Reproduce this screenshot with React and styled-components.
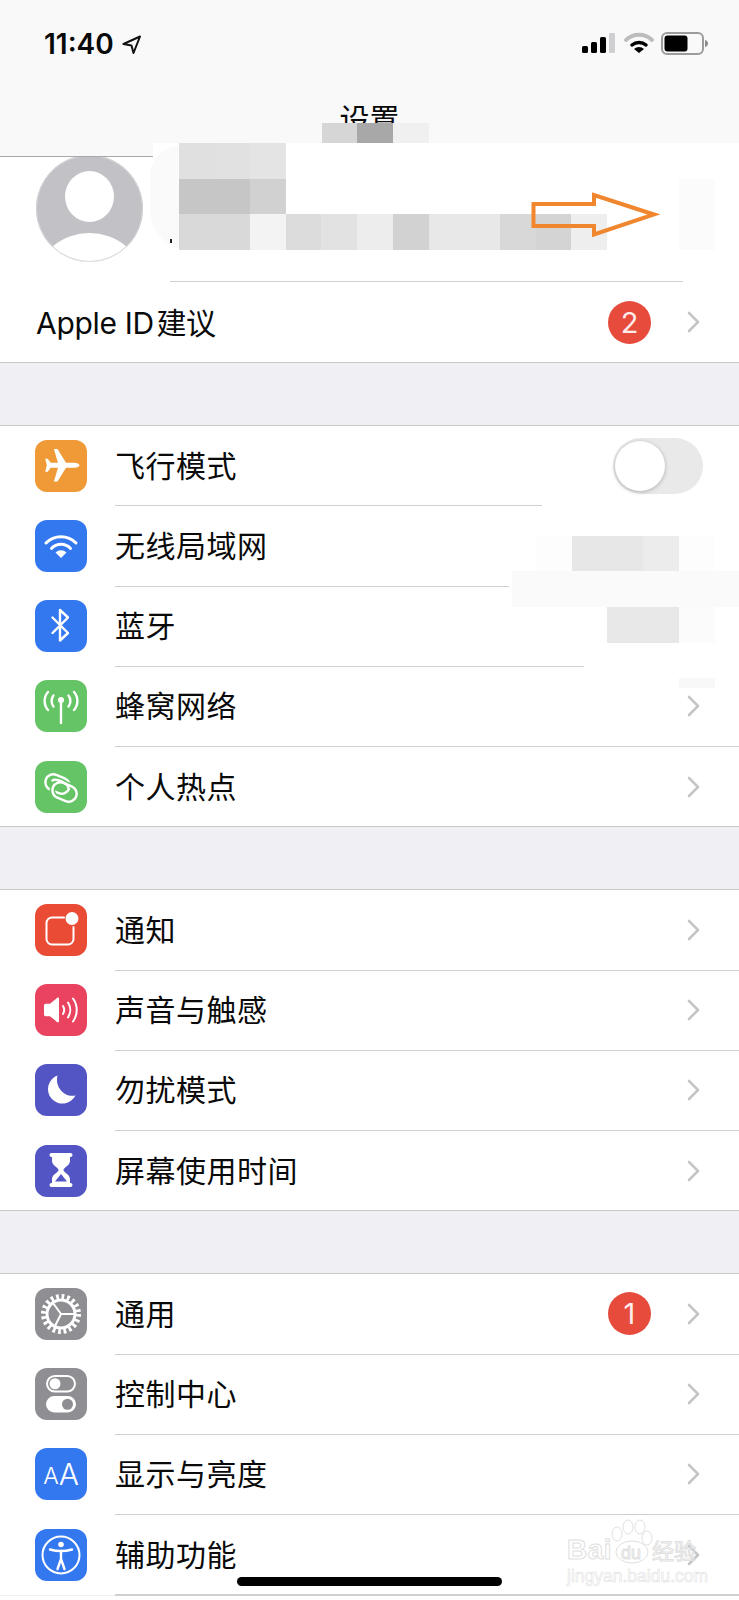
import styled, { createGlobalStyle } from "styled-components";

const CJK = `"Noto Sans CJK SC", "Noto Sans", sans-serif`;

const GlobalStyle = createGlobalStyle`
  html, body {
    margin: 0;
    padding: 0;
    background: #efeff4;
  }
`;

const Screen = styled.div`
  position: relative;
  width: 739px;
  height: 1600px;
  overflow: hidden;
  display: flex;
  flex-direction: column;
  background: #efeff4;
  color: #0a0a0a;
  font-family: ${CJK};
`;

// 상단 바
const Nav = styled.header`
  position: relative;
  z-index: 1;
  flex: none;
  height: 157px;
  box-sizing: border-box;
  padding-top: 24px;
  background: #f9f9fa;
  border-bottom: 1px solid #a9a9ac;
`;

const StatusBar = styled.div`
  height: 40px;
  display: flex;
  align-items: center;
  padding: 0 30px 0 44px;
`;

const Time = styled.span`
  font-family: Inter, "Liberation Sans", sans-serif;
  font-size: 28px;
  font-weight: 600;
  letter-spacing: 0;
  margin-right: 8px;
`;

const StatusIcons = styled.div`
  margin-left: auto;
  display: flex;
  align-items: center;
`;

const Title = styled.h1`
  margin: 33px 0 0;
  font-size: 30px;
  line-height: 40px;
  font-weight: 400;
  text-align: center;
`;

const Profile = styled.div`
  flex: none;
  height: 124px;
  padding-left: 36px;
  background: #fff;
`;

const Avatar = styled.svg`
  display: block;
  margin-top: -2px;
`;

const Group = styled.section`
  flex: none;
  display: flex;
  flex-direction: column;
  background: #fff;
  border-top: ${(p) => (p.$flush ? "none" : "1px solid #c9c9cc")};
  border-bottom: 1px solid #c9c9cc;
  ${(p) => p.$open && "border-bottom: none;"}
`;

const Gap = styled.div`
  flex: none;
  height: 62px;
  background: #efeff4;
`;

const Row = styled.div`
  flex: none;
  height: ${(p) => p.$h || 79.25}px;
  box-sizing: border-box;
  display: flex;
  align-items: center;
  padding: 0 39px 0 35px;
  background: #fff;
`;

const Divider = styled.div`
  flex: none;
  height: 1px;
  margin-left: ${(p) => p.$start || 115}px;
  margin-right: ${(p) => p.$cut || 0}px;
  background: #d0d0d3;
`;

const Tile = styled.div`
  flex: none;
  width: 52px;
  height: 52px;
  border-radius: 12px;
  background: ${(p) => p.$bg};
  color: #fff;
  display: flex;
  align-items: center;
  justify-content: center;
  margin-right: 28px;
`;

const Label = styled.span`
  font-size: 30px;
  line-height: 40px;
  letter-spacing: 0.5px;
  padding-bottom: 4px;
`;

const AppleLabel = styled(Label)`
  font-family: Inter, ${CJK};
  letter-spacing: -0.3px;
  padding-bottom: 0;
  margin: 2px 0 0 1px;
`;

const Badge = styled.span`
  margin-left: auto;
  width: 43px;
  height: 43px;
  border-radius: 50%;
  background: #e74b3c;
  color: #fdecea;
  font-family: Inter, sans-serif;
  font-size: 29px;
  line-height: 43px;
  text-align: center;
`;

const Chevron = styled.svg`
  flex: none;
  margin-left: ${(p) => (p.$afterBadge ? "36px" : "auto")};
`;

const Toggle = styled.div`
  margin-left: auto;
  margin-right: -3px;
  width: 90px;
  height: 56px;
  box-sizing: border-box;
  padding: 3px 2px;
  border-radius: 28px;
  background: #e9e9ea;
`;

const Knob = styled.div`
  width: 50px;
  height: 50px;
  border-radius: 50%;
  background: #fff;
  box-shadow: 0 1px 4px rgba(0, 0, 0, 0.25);
`;

const AaSmall = styled.span`
  font-family: Inter, sans-serif;
  font-size: 23px;
  font-weight: 300;
  line-height: 1;
  margin-top: 5px;
`;

const AaBig = styled.span`
  font-family: Inter, sans-serif;
  font-size: 30px;
  font-weight: 300;
  line-height: 1;
`;

// 가림 처리(모자이크) 레이어
const Smudge = styled.div`
  position: absolute;
  z-index: 2;
  left: ${(p) => p.$x}px;
  top: ${(p) => p.$y}px;
  width: ${(p) => p.$w}px;
  height: ${(p) => p.$h}px;
  background: ${(p) => p.$c};
  border-radius: ${(p) => p.$r || "0"};
`;

const Mosaic = styled.div`
  position: absolute;
  z-index: 3;
  left: ${(p) => p.$x}px;
  top: ${(p) => p.$y}px;
  display: grid;
  grid-template-columns: repeat(${(p) => p.$cols}, 35.7px);
  grid-auto-rows: ${(p) => p.$rowH}px;
`;

const MosaicCell = styled.div`
  background: ${(p) => p.$c || "transparent"};
`;

const ArrowMark = styled.svg`
  position: absolute;
  z-index: 4;
  left: 530px;
  top: 190px;
`;

const HomeBar = styled.div`
  position: absolute;
  z-index: 5;
  left: 237px;
  top: 1577px;
  width: 265px;
  height: 9px;
  border-radius: 5px;
  background: #000;
`;

const Watermark = styled.div`
  position: absolute;
  z-index: 4;
  left: 567px;
  top: 1519px;
  width: 136px;
  height: 66px;
  color: transparent;
  -webkit-text-stroke: 1px #e0e0e0;
`;

const WatermarkLogo = styled.div`
  position: relative;
  display: flex;
  align-items: baseline;
  height: 46px;
  padding-top: 14px;
  box-sizing: border-box;
  font-family: "Liberation Sans", sans-serif;
  font-weight: 700;
  font-size: 28px;
  line-height: 32px;
  letter-spacing: 0.5px;
`;

const WatermarkDu = styled.span`
  margin: 0 11px 0 9px;
  font-size: 18px;
  font-weight: 400;
  letter-spacing: 0;
`;

const WatermarkCn = styled.span`
  font-family: ${CJK};
  font-size: 22px;
  font-weight: 400;
  letter-spacing: 0;
`;

const WatermarkPaw = styled.svg`
  position: absolute;
  left: 43px;
  top: 0;
`;

const WatermarkUrl = styled.div`
  font-family: "Liberation Sans", sans-serif;
  font-size: 17.5px;
  line-height: 20px;
  margin-top: 1px;
  -webkit-text-stroke: 0.6px #e2e2e2;
  white-space: nowrap;
`;

const Line = ({ children, w = 2.4 }) => (
  <svg width="52" height="52" viewBox="0 0 52 52" fill="none" stroke="#fff" strokeWidth={w} strokeLinecap="round" strokeLinejoin="round">
    {children}
  </svg>
);

const icons = {
  plane: (
    <Line>
      <path stroke="none" fill="#fff" d="M44.5 25.3c0 1.6-2.6 2.5-5 2.5H31L22.5 41.5h-3.6L23 27.8h-7.3l-3 4h-2.5l1.6-6.5-1.6-6.5h2.5l3 4H23L18.9 9h3.6L31 22.8h8.5c2.4 0 5 .9 5 2.5z" />
    </Line>
  ),
  wifi: (
    <Line w={3}>
      <path d="M11 23a21 21 0 0 1 30 0" />
      <path d="M16.5 28.5a13 13 0 0 1 19 0" />
      <path stroke="none" fill="#fff" d="M26 38l-5.5-5.5a8 8 0 0 1 11 0z" />
    </Line>
  ),
  bluetooth: (
    <Line>
      <path d="M17.5 17.5L33 33l-8 7.5V10l8 7.5L17.5 33" />
    </Line>
  ),
  cellular: (
    <Line>
      <circle cx="26" cy="20" r="3" fill="#fff" stroke="none" />
      <path d="M26 21v22" />
      <path d="M13 12c-4.5 5-4.5 13 0 18M39 12c4.5 5 4.5 13 0 18" />
      <path d="M18.5 15.5c-2.5 3-2.5 8 0 11M33.5 15.5c2.5 3 2.5 8 0 11" />
    </Line>
  ),
  hotspot: (
    <Line w={2.4}>
      <rect x="10" y="15" width="25" height="16" rx="8" transform="rotate(22 22.500 23)" />
      <rect x="17" y="23" width="25" height="16" rx="8" transform="rotate(22 29.500 31)" stroke="#65c466" strokeWidth="5.500" />
      <rect x="17" y="23" width="25" height="16" rx="8" transform="rotate(22 29.500 31)" />
      <path d="M17.500 19.500c2-1.500 5-1 9 .8 3.500 1.600 6.500 3.800 7 6.700" />
    </Line>
  ),
  notify: (
    <Line w={2}>
      <path d="M29 13.5H17a5.5 5.5 0 0 0-5.5 5.5v16a5.5 5.5 0 0 0 5.5 5.5h16a5.5 5.5 0 0 0 5.5-5.5V23" />
      <circle cx="37" cy="14.5" r="6.5" fill="#fff" stroke="none" />
    </Line>
  ),
  sound: (
    <Line w={2}>
      <path stroke="none" fill="#fff" d="M9 21.5c0-1 .7-1.7 1.7-1.7H15l7-5.8c1-.8 2-.3 2 1v22c0 1.300-1 1.800-2 1l-7-5.800h-4.300c-1 0-1.700-.7-1.700-1.700z" />
      <path d="M28 22c1.500 2.500 1.500 5.500 0 8" />
      <path d="M33 18.500c3 4.500 3 10.500 0 15" />
      <path d="M38 14.500c5 7 5 16 0 23" />
    </Line>
  ),
  moon: (
    <Line>
      <path stroke="none" fill="#fff" d="M22.500 11.500a14.500 14.500 0 1 0 18 20c-10.500 2.500-21-8-18-20z" />
    </Line>
  ),
  hourglass: (
    <Line w={2}>
      <rect x="14.500" y="8" width="23" height="4" rx="2" fill="#fff" stroke="none" />
      <rect x="14.500" y="38" width="23" height="4" rx="2" fill="#fff" stroke="none" />
      <path stroke="none" fill="#fff" d="M17 12h18v4c0 4.500-6.500 6.500-6.500 9s6.500 4.500 6.500 9v4H17v-4c0-4.500 6.500-6.500 6.500-9S17 20.500 17 16z" />
      <path stroke="none" fill="#5455c4" d="M26 29l6 7.500H20z" />
    </Line>
  ),
  gear: (
    <Line w={2}>
      <circle cx="26" cy="26" r="17.500" strokeWidth="5" strokeDasharray="2.750 2.750" strokeLinecap="butt" />
      <circle cx="26" cy="26" r="14" strokeWidth="3" />
      <path d="M26 26h13M26 26l-8-11M26 26l-6 12" />
    </Line>
  ),
  control: (
    <Line w={2}>
      <rect x="12" y="8" width="28" height="15.500" rx="7.750" />
      <circle cx="20" cy="15.750" r="5.500" fill="#fff" stroke="none" />
      <rect x="11" y="28" width="30" height="16.500" rx="8.250" fill="#fff" stroke="none" />
      <circle cx="32.500" cy="36.250" r="5.500" fill="#8e8e93" stroke="none" />
    </Line>
  ),
  access: (
    <Line w={2}>
      <circle cx="26" cy="26" r="18.500" />
      <circle cx="26" cy="15.500" r="2.800" fill="#fff" stroke="none" />
      <path strokeWidth="2.400" d="M15 20.500c7 2 15 2 22 0" />
      <path strokeWidth="2.400" d="M26 22v8l-3.500 10M26 30l3.500 10" />
    </Line>
  ),
  aa: (
    <>
      <AaSmall>A</AaSmall>
      <AaBig>A</AaBig>
    </>
  ),
};

const ChevronIcon = ({ afterBadge }) => (
  <Chevron $afterBadge={afterBadge} width="13" height="22" viewBox="0 0 13 22" fill="none" stroke="#c5c5c8" strokeWidth="2.600" strokeLinecap="round" strokeLinejoin="round">
    <path d="M2 2l9 9-9 9" />
  </Chevron>
);

const ORANGE = "#f09a37";
const BLUE = "#3478f0";
const GREEN = "#65c466";
const RED = "#e94b35";
const PINK = "#e9435f";
const INDIGO = "#5455c4";
const GRAY = "#8e8e93";

const groups = [
  [
    { icon: "plane", bg: ORANGE, label: "飞行模式", toggle: true, cut: 197 },
    { icon: "wifi", bg: BLUE, label: "无线局域网", plain: true, cut: 230 },
    { icon: "bluetooth", bg: BLUE, label: "蓝牙", plain: true, cut: 155 },
    { icon: "cellular", bg: GREEN, label: "蜂窝网络" },
    { icon: "hotspot", bg: GREEN, label: "个人热点", last: true },
  ],
  [
    { icon: "notify", bg: RED, label: "通知" },
    { icon: "sound", bg: PINK, label: "声音与触感" },
    { icon: "moon", bg: INDIGO, label: "勿扰模式" },
    { icon: "hourglass", bg: INDIGO, label: "屏幕使用时间", last: true },
  ],
  [
    { icon: "gear", bg: GRAY, label: "通用", badge: 1 },
    { icon: "control", bg: GRAY, label: "控制中心" },
    { icon: "aa", bg: BLUE, label: "显示与亮度" },
    { icon: "access", bg: BLUE, label: "辅助功能" },
  ],
];

const nameMosaic = [
  "#e0e0e0", "#e1e1e1", "#e4e4e4", null, null, null, null, null, null, null, null, null,
  "#c6c6c6", "#c6c6c6", "#d1d1d1", null, null, null, null, null, null, null, null, null,
  "#d9d9d9", "#d9d9d9", "#f3f3f3", "#dcdcdc", "#e2e2e2", "#ededed", "#d2d2d2", "#e8e8e8", "#e8e8e8", "#d8d8d8", "#d4d4d4", "#eeeeee",
];

const SettingRow = ({ item }) => (
  <>
    <Row>
      <Tile $bg={item.bg}>{icons[item.icon]}</Tile>
      <Label>{item.label}</Label>
      {item.toggle && (
        <Toggle>
          <Knob />
        </Toggle>
      )}
      {item.badge && <Badge>{item.badge}</Badge>}
      {!item.toggle && !item.plain && <ChevronIcon afterBadge={!!item.badge} />}
    </Row>
    {!item.last && <Divider $cut={item.cut} />}
  </>
);

const App = () => {
  return (
    <Screen>
      <GlobalStyle />
      <Nav>
        <StatusBar>
          <Time>11:40</Time>
          <svg width="19" height="19" viewBox="0 0 19 19" fill="none" stroke="#111" strokeWidth="2" strokeLinejoin="round">
            <path d="M18 1.500L1.500 9l8 1.500 2 7.500z" />
          </svg>
          <StatusIcons>
            <svg width="127" height="24" viewBox="0 0 127 24">
              <rect x="0" y="14" width="6" height="7" rx="1.500" fill="#000" />
              <rect x="9" y="10" width="6" height="11" rx="1.500" fill="#000" />
              <rect x="18" y="5" width="6" height="16" rx="1.500" fill="#000" />
              <rect x="27" y="1" width="6" height="20" rx="1" fill="#cfcfd1" />
              <path d="M44 8a19 19 0 0 1 26 0" fill="none" stroke="#bdbdbf" strokeWidth="4" strokeLinecap="round" />
              <path d="M50 13a11 11 0 0 1 14 0" fill="none" stroke="#000" strokeWidth="3.500" strokeLinecap="round" />
              <path d="M57 21l-5-4a7.500 7.500 0 0 1 10 0z" fill="#000" />
              <rect x="80" y="1" width="41" height="21" rx="5" fill="none" stroke="#9c9c9f" strokeWidth="2" />
              <rect x="82.500" y="3.500" width="23" height="16" rx="3" fill="#000" />
              <path d="M123 8c2 .5 3 2 3 3.500s-1 3-3 3.500z" fill="#8b8b8e" />
            </svg>
          </StatusIcons>
        </StatusBar>
        <Title>设置</Title>
      </Nav>

      <Profile>
        <Avatar width="107" height="107" viewBox="0 0 107 107">
          <defs>
            <clipPath id="avatar-clip">
              <circle cx="53.500" cy="53.500" r="53.500" />
            </clipPath>
          </defs>
          <g clipPath="url(#avatar-clip)">
            <rect width="107" height="107" fill="#c1c1c6" />
            <ellipse cx="53.500" cy="41.500" rx="24.500" ry="25.500" fill="#fff" />
            <ellipse cx="53.500" cy="120" rx="50" ry="42" fill="#fff" />
          </g>
          <circle cx="53.500" cy="53.500" r="53" fill="none" stroke="#d6d6d9" strokeWidth="1" />
        </Avatar>
      </Profile>
      <Group $flush>
        <Divider $start={170} $cut={56} />
        <Row $h={80}>
          <AppleLabel>Apple ID{"\u200A"}建议</AppleLabel>
          <Badge>2</Badge>
          <ChevronIcon afterBadge />
        </Row>
      </Group>
      <Gap />

      {groups.map((rows, i) => (
        <div key={i}>
          <Group $open={i === 2}>
            {rows.map((item) => (
              <SettingRow key={item.label} item={item} />
            ))}
          </Group>
          {i < 2 && <Gap />}
        </div>
      ))}
      <Divider />
      <Row $h={10} />

      {/* 가림 처리 */}
      <Smudge $x={153} $y={143} $w={586} $h={16} $c="#fff" />
      <Smudge $x={150} $y={146} $w={40} $h={104} $c="#fafafa" $r="30px 0 0 40px" />
      <Smudge $x={170} $y={239} $w={2} $h={4} $c="#222" />
      <Smudge $x={679} $y={179} $w={36} $h={71} $c="#fbfbfb" />
      <Smudge $x={536} $y={536} $w={179} $h={35} $c="#fdfdfd" />
      <Smudge $x={572} $y={536} $w={71} $h={35} $c="#e7e7e7" />
      <Smudge $x={643} $y={536} $w={36} $h={35} $c="#ececec" />
      <Smudge $x={512} $y={571} $w={227} $h={36} $c="#fafafa" />
      <Smudge $x={607} $y={607} $w={72} $h={36} $c="#e8e8e8" />
      <Smudge $x={679} $y={607} $w={36} $h={36} $c="#fbfbfb" />
      <Smudge $x={679} $y={678} $w={36} $h={10} $c="#f8f8f8" />
      <Mosaic $x={321.5} $y={123} $cols={3} $rowH={20}>
        <MosaicCell $c="#d6d6d6" />
        <MosaicCell $c="#a8a8a8" />
        <MosaicCell $c="#f0f0f0" />
      </Mosaic>
      <Mosaic $x={178.7} $y={143} $cols={12} $rowH={35.7}>
        {nameMosaic.map((c, i) => (
          <MosaicCell key={i} $c={c} />
        ))}
      </Mosaic>

      <ArrowMark width="130" height="50" viewBox="0 0 130 50" fill="none" stroke="#f0872e" strokeWidth="4" strokeLinejoin="miter">
        <path d="M3.500 14H64V5l60 19.500L64 44.500V36H3.500z" />
      </ArrowMark>

      <Watermark>
        <WatermarkLogo>
          Bai
          <WatermarkPaw width="46" height="46" viewBox="0 0 46 46" fill="none" stroke="#e0e0e0" strokeWidth="1">
            <ellipse cx="7" cy="15" rx="5" ry="7" />
            <ellipse cx="18" cy="8" rx="5" ry="7" />
            <ellipse cx="30" cy="8" rx="5" ry="7" />
            <ellipse cx="37" cy="19" rx="5" ry="7" />
            <ellipse cx="22" cy="33" rx="16" ry="11" />
          </WatermarkPaw>
          <WatermarkDu>du</WatermarkDu>
          <WatermarkCn>经验</WatermarkCn>
        </WatermarkLogo>
        <WatermarkUrl>jingyan.baidu.com</WatermarkUrl>
      </Watermark>

      <HomeBar />
    </Screen>
  );
};

export default App;
